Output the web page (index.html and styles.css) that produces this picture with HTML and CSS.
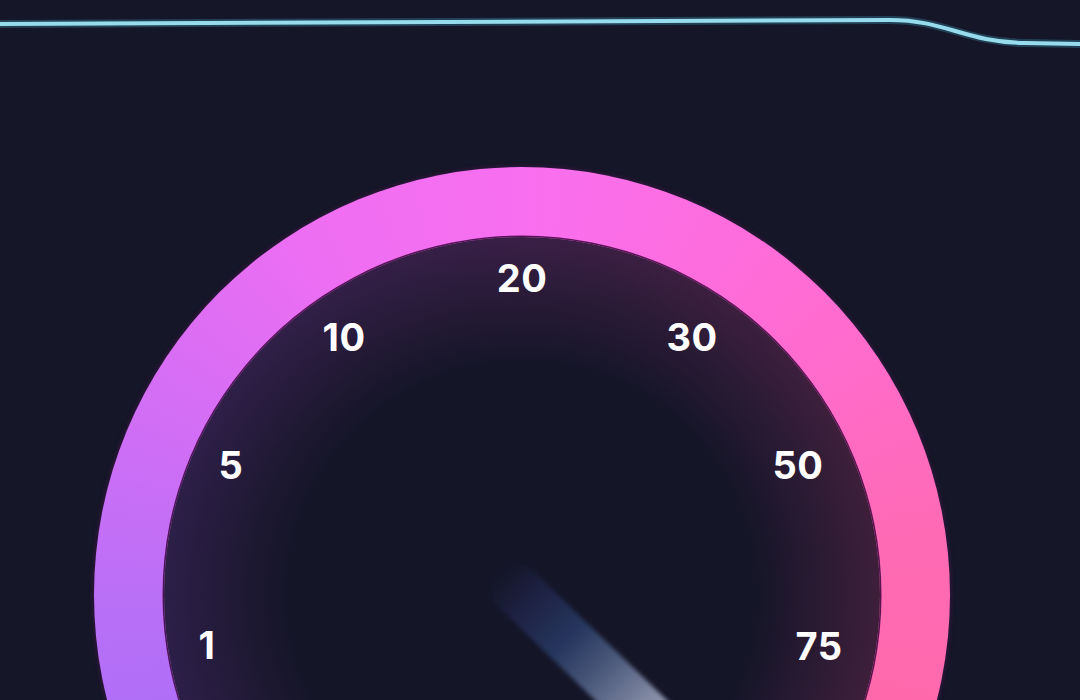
FILE: index.html
```html
<!DOCTYPE html>
<html>
  <head>
    <meta charset="utf-8" />
    <title>Speed Test</title>
    <meta name="viewport" content="width=device-width, initial-scale=1" />
    <link rel="stylesheet" href="styles.css">
  </head>
  <body>
    <svg class="trace" width="1080" height="60" viewBox="0 0 1080 60">
      <path class="trace-glow" d="M0 24 C 300 21, 600 20, 890 20 C 945 20, 965 42, 1025 43 L 1080 44" />
      <path class="trace-line" d="M0 24 C 300 21, 600 20, 890 20 C 945 20, 965 42, 1025 43 L 1080 44" />
    </svg>
    <div class="stage">
      <div class="dial">
        <div class="face">
          <!-- labels sit on the dial, offsets from the face corner -->
          <span class="mark" style="left: 358px; top: 41px;">20</span>
          <span class="mark" style="left: 180px; top: 100px;">10</span>
          <span class="mark" style="left: 528px; top: 100px;">30</span>
          <span class="mark" style="left: 67px; top: 228px;">5</span>
          <span class="mark" style="left: 634px; top: 228px;">50</span>
          <span class="mark" style="left: 43px; top: 408px;">1</span>
          <span class="mark" style="left: 655px; top: 409px;">75</span>
          <div class="needle"></div>
        </div>
      </div>
    </div>
  </body>
</html>
```

FILE: styles.css
```css
html, body {
  margin: 0;
  height: 700px;
  overflow: hidden;
  background-color: #151627;
}
body {
  font-family: "Inter", "Open Sans", sans-serif;
  color: #ffffff;
}
.trace {
  display: block;
}
.trace-line {
  fill: none;
  stroke: #96dcec;
  stroke-width: 4;
  stroke-linecap: round;
}
.trace-glow {
  fill: none;
  stroke: #3fa2c4;
  stroke-width: 8;
  opacity: 0.3;
}
.stage {
  padding: 107px 0 0 94px;
}
.dial {
  width: 856px;
  height: 856px;
  border-radius: 50%;
  padding: 70px;
  box-sizing: border-box;
  background: conic-gradient(
    #f86ff0 0deg,
    #ff6cd6 40deg,
    #ff6ab6 80deg,
    #ff69a6 120deg,
    #ff69a6 180deg,
    #a76cf7 235deg,
    #b66ff7 265deg,
    #d56ef5 300deg,
    #ee6ef2 330deg,
    #f86ff0 360deg
  );
  box-shadow: 0 0 4px 1px rgba(70, 20, 80, 0.7);
}
.face {
  position: relative;
  width: 716px;
  height: 716px;
  border-radius: 50%;
  overflow: hidden;
  background:
    radial-gradient(circle closest-side, #141527 0%, #141527 64%, rgba(20, 21, 39, 0) 100%),
    linear-gradient(90deg, #2c1f48 0%, #3a1f46 50%, #3e1f3a 100%);
  box-shadow: 0 0 0 1.5px rgba(70, 10, 70, 0.9);
}
.mark {
  position: absolute;
  transform: translate(-50%, -50%);
  font-size: 38px;
  font-weight: 700;
  line-height: 1;
  letter-spacing: 0.5px;
}
.needle {
  position: absolute;
  left: 358px;
  top: 358px;
  width: 300px;
  height: 50px;
  margin: -25px 0 0 -32px;
  transform-origin: 32px 25px;
  transform: rotate(44deg);
  border-radius: 25px 0 0 25px;
  background: linear-gradient(90deg,
    rgba(30, 34, 70, 0) 0%,
    rgba(34, 40, 80, 0.7) 15%,
    #26365e 32%,
    #4c5a7c 48%,
    #8b92aa 68%,
    #a4a9bb 100%);
  filter: blur(2px);
}
```
